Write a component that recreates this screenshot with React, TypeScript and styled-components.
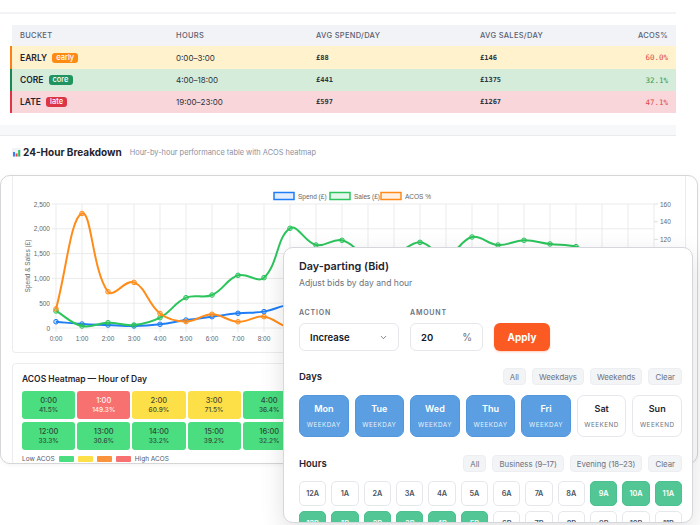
import React from 'react';
import styled, { createGlobalStyle } from 'styled-components';
import { ChevronDown } from 'lucide-react';

const GlobalStyle = createGlobalStyle`
  html, body { margin: 0; padding: 0; background: #fff; }
  body { font-family: Inter, "Noto Sans", sans-serif; -webkit-font-smoothing: antialiased; }
  * { box-sizing: border-box; }
`;

const Page = styled.div`
  position: relative;
  width: 700px;
  height: 525px;
  overflow: hidden;
  background: #fff;
`;

const TopStrip = styled.div`
  width: 676px;
  height: 14px;
  border-bottom: 2px solid #f2f3f6;
`;

const Table = styled.div`
  width: 666px;
  margin: 11px 0 0 10px;
`;

const Row = styled.div<{ $bg: string; $accent: string; $h: number }>`
  display: grid;
  grid-template-columns: 156px 140px 164px 1fr 80px;
  align-items: center;
  height: ${(p) => p.$h}px;
  padding: 0 8px;
  background: ${(p) => p.$bg};
  border-left: 2px solid ${(p) => p.$accent};
`;

const HeadCell = styled.div<{ $right?: boolean }>`
  font-size: 7.5px;
  font-weight: 500;
  color: #5b6072;
  letter-spacing: 0.3px;
  text-transform: uppercase;
  text-align: ${(p) => (p.$right ? 'right' : 'left')};
`;

const BucketCell = styled.div`
  display: flex;
  align-items: center;
  gap: 5px;
  font-size: 8.5px;
  font-weight: 600;
  color: #1f2430;
`;

const Badge = styled.span<{ $bg: string }>`
  font-size: 7.5px;
  font-weight: 500;
  line-height: 10px;
  color: #fff;
  background: ${(p) => p.$bg};
  padding: 0 4px;
  border-radius: 3px;
`;

const HoursCell = styled.div`
  font-size: 8px;
  color: #2d3340;
`;

const MoneyCell = styled.div`
  font-family: "DejaVu Sans Mono", "Liberation Mono", monospace;
  font-size: 7px;
  font-weight: 700;
  color: #2d3340;
`;

const AcosCell = styled.div<{ $color: string }>`
  font-family: "DejaVu Sans Mono", "Liberation Mono", monospace;
  font-size: 7.5px;
  color: ${(p) => p.$color};
  text-align: right;
`;

const Band = styled.div`
  width: 676px;
  height: 11px;
  margin-top: 12px;
  background: #f7f8fa;
  border-bottom: 1px solid #e9ebef;
`;

const SectionHead = styled.div`
  display: flex;
  align-items: center;
  height: 32px;
  padding-left: 12px;
`;

const SectionTitle = styled.span`
  margin-left: 2px;
  font-size: 10px;
  font-weight: 700;
  color: #1f2430;
`;

const SectionSub = styled.span`
  margin-left: 8px;
  font-size: 7.4px;
  color: #8b90a0;
`;

const Frame = styled.div`
  margin-top: 7px;
  width: 698px;
  height: 289px;
  border: 1px solid #d6d6d8;
  border-radius: 10px;
  overflow: hidden;
  padding: 0 11px;
  background: #fff;
  box-shadow: 0 1px 4px rgba(0, 0, 0, 0.05);
`;

const ChartCard = styled.div`
  height: 177px;
  border: 1px solid #ececee;
  border-top: none;
  border-radius: 0 0 4px 4px;
  overflow: hidden;
`;

const HeatCard = styled.div`
  margin-top: 10px;
  border: 1px solid #ececee;
  border-radius: 4px;
  padding: 9px 3px 0 9px;
`;

const HeatTitle = styled.div`
  font-size: 8.5px;
  font-weight: 600;
  line-height: 12px;
  color: #1f2430;
`;

const HeatGrid = styled.div`
  margin-top: 6px;
  display: grid;
  grid-template-columns: repeat(12, 1fr);
  gap: 3px 2px;
`;

const HeatCell = styled.div<{ $bg: string; $fg: string }>`
  height: 28px;
  border-radius: 3px;
  background: ${(p) => p.$bg};
  color: ${(p) => p.$fg};
  display: flex;
  flex-direction: column;
  align-items: center;
  justify-content: center;
  gap: 2px;
`;

const HeatHour = styled.span`
  font-size: 7.5px;
  font-weight: 500;
  line-height: 8px;
`;

const HeatPct = styled.span`
  font-size: 6.5px;
  font-weight: 500;
  line-height: 7px;
`;

const HeatLegend = styled.div`
  margin-top: 4px;
  display: flex;
  align-items: center;
  gap: 4px;
  height: 10px;
  font-size: 6.5px;
  color: #555a66;
`;

const Swatch = styled.span<{ $bg: string }>`
  width: 15px;
  height: 6px;
  border-radius: 1px;
  background: ${(p) => p.$bg};
`;

const Popup = styled.div`
  position: absolute;
  left: 283px;
  top: 247px;
  width: 410px;
  height: 276px;
  background: #fff;
  border: 1px solid #d5d7dc;
  border-radius: 10px;
  box-shadow: 0 8px 24px rgba(0, 0, 0, 0.12);
  overflow: hidden;
  padding: 11px 10px 0 15px;
`;

const PopTitle = styled.div`
  font-size: 10.8px;
  font-weight: 600;
  line-height: 16px;
  color: #1f2430;
`;

const PopSub = styled.div`
  margin-top: 2px;
  font-size: 8.6px;
  line-height: 12px;
  color: #6b7280;
`;

const Controls = styled.div`
  margin-top: 19px;
  display: flex;
  align-items: flex-end;
  gap: 11px;
`;

const Field = styled.div`
  display: flex;
  flex-direction: column;
`;

const FieldLabel = styled.div`
  font-size: 7px;
  font-weight: 600;
  line-height: 10px;
  letter-spacing: 0.8px;
  color: #6b7280;
  margin-bottom: 5px;
`;

const InputBox = styled.div<{ $w: number }>`
  width: ${(p) => p.$w}px;
  height: 28px;
  border: 1px solid #e5e7eb;
  border-radius: 6px;
  padding: 0 10px;
  display: flex;
  align-items: center;
  justify-content: space-between;
  font-size: 9.5px;
  font-weight: 600;
  color: #111827;
`;

const Unit = styled.span`
  font-size: 10px;
  font-weight: 400;
  color: #6b7280;
`;

const ApplyButton = styled.button`
  width: 56px;
  height: 28px;
  border: none;
  border-radius: 6px;
  background: #fb5a22;
  color: #fff;
  font-family: inherit;
  font-size: 10px;
  font-weight: 700;
  box-shadow: 0 1px 2px rgba(251, 90, 34, 0.3);
`;

const GroupHead = styled.div<{ $mt: number }>`
  margin-top: ${(p) => p.$mt}px;
  height: 17px;
  display: flex;
  align-items: center;
  justify-content: space-between;
`;

const GroupTitle = styled.span`
  font-size: 9.5px;
  font-weight: 600;
  color: #1f2430;
`;

const Chips = styled.div`
  display: flex;
  gap: 6px;
`;

const Chip = styled.button`
  height: 17px;
  padding: 0 6px;
  border: 1px solid #eceef2;
  border-radius: 4px;
  background: #f3f4f6;
  font-family: inherit;
  font-size: 7.8px;
  color: #6b7280;
`;

const DayGrid = styled.div`
  margin-top: 10px;
  display: grid;
  grid-template-columns: repeat(7, 1fr);
  gap: 6px;
`;

const DayTile = styled.div<{ $on: boolean }>`
  height: 42px;
  border-radius: 7px;
  border: 1px solid ${(p) => (p.$on ? '#5297dc' : '#e5e7eb')};
  background: ${(p) => (p.$on ? '#5b9fe2' : '#fff')};
  display: flex;
  flex-direction: column;
  align-items: center;
  justify-content: center;
  gap: 6px;
`;

const DayName = styled.span<{ $on: boolean }>`
  font-size: 9px;
  font-weight: 600;
  line-height: 12px;
  color: ${(p) => (p.$on ? '#fff' : '#1f2430')};
`;

const DaySub = styled.span<{ $on: boolean }>`
  font-size: 6.3px;
  line-height: 8px;
  letter-spacing: 0.5px;
  color: ${(p) => (p.$on ? 'rgba(255,255,255,0.88)' : '#6b7280')};
`;

const HourGrid = styled.div`
  margin-top: 9px;
  display: grid;
  grid-template-columns: repeat(12, 1fr);
  gap: 5px;
`;

const HourCell = styled.div<{ $on: boolean }>`
  height: 25px;
  border-radius: 5px;
  border: 1px solid ${(p) => (p.$on ? '#4cc08f' : '#e5e7eb')};
  background: ${(p) => (p.$on ? '#52c795' : '#fff')};
  color: ${(p) => (p.$on ? '#fff' : '#4b5563')};
  display: flex;
  align-items: center;
  justify-content: center;
  font-size: 7.3px;
  font-weight: 600;
`;

const buckets = [
  { name: 'EARLY', badge: 'early', badgeBg: '#fd8b12', bg: '#fff2cc', accent: '#fd7e14', hours: '0:00–3:00', spend: '£88', sales: '£146', acos: '60.0%', acosColor: '#e0474c', h: 23 },
  { name: 'CORE', badge: 'core', badgeBg: '#1f9360', bg: '#d5ecda', accent: '#198754', hours: '4:00–18:00', spend: '£441', sales: '£1375', acos: '32.1%', acosColor: '#2f9a5c', h: 22 },
  { name: 'LATE', badge: 'late', badgeBg: '#dc3545', bg: '#f8d6da', accent: '#dc3545', hours: '19:00–23:00', spend: '£597', sales: '£1267', acos: '47.1%', acosColor: '#e0474c', h: 22 },
];

const sales = [343, 40, 107, 60, 208, 611, 665, 1062, 1015, 2010, 1673, 1768, 1450, 1480, 1727, 1450, 1835, 1673, 1768, 1694, 1640, 1400, 1250, 1150];
const spend = [127, 80, 60, 40, 74, 160, 228, 296, 330, 470, 420, 460, 480, 440, 575, 570, 590, 590, 672, 678, 738, 754, 725, 750];
const acos = [41.5, 149.3, 60.9, 71.5, 36.4, 27.2, 35.5, 27.0, 32.8, 20.5, 24.5, 26.0, 33.3, 30.6, 33.2, 39.2, 32.2, 35.0, 38.4, 40.1, 45.3, 52.0, 58.6, 65.2];

const X0 = 56;
const DX = 26;
const xAt = (i: number) => X0 + i * DX;
const yLeft = (v: number) => 327 - v * 0.0496;
const yRight = (v: number) => 203 + (160 - v) * (124 / 140);

type P = { x: number; y: number };

// same spline as chart.js (tension 0.4)
function smoothPath(pts: P[], t = 0.4) {
  const cps = pts.map((cur, i) => {
    const prev = pts[i - 1] || cur;
    const next = pts[i + 1] || cur;
    const d01 = Math.hypot(cur.x - prev.x, cur.y - prev.y);
    const d12 = Math.hypot(next.x - cur.x, next.y - cur.y);
    const s01 = d01 + d12 ? d01 / (d01 + d12) : 0;
    const s12 = d01 + d12 ? d12 / (d01 + d12) : 0;
    const fa = t * s01;
    const fb = t * s12;
    return {
      p: { x: cur.x - fa * (next.x - prev.x), y: cur.y - fa * (next.y - prev.y) },
      n: { x: cur.x + fb * (next.x - prev.x), y: cur.y + fb * (next.y - prev.y) },
    };
  });
  let d = `M${pts[0].x},${pts[0].y}`;
  for (let i = 1; i < pts.length; i++) {
    const a = cps[i - 1].n;
    const b = cps[i].p;
    d += ` C${a.x.toFixed(2)},${a.y.toFixed(2)} ${b.x.toFixed(2)},${b.y.toFixed(2)} ${pts[i].x},${pts[i].y.toFixed(2)}`;
  }
  return d;
}

const series = [
  { color: '#1f7ef5', fill: 'rgba(31,126,245,0.25)', pts: spend.map((v, i) => ({ x: xAt(i), y: yLeft(v) })) },
  { color: '#2cc45c', fill: 'rgba(44,196,92,0.25)', pts: sales.map((v, i) => ({ x: xAt(i), y: yLeft(v) })) },
  { color: '#ff8c1a', fill: 'rgba(255,140,26,0.25)', pts: acos.map((v, i) => ({ x: xAt(i), y: yRight(v) })) },
];

const TrendChart = () => {
  const leftTicks = [0, 500, 1000, 1500, 2000, 2500];
  const rightTicks = [160, 140, 120, 100, 80, 60, 40, 20];
  const legend = [
    { x: 274, label: 'Spend (£)', color: '#1f7ef5', fill: '#e3eefd' },
    { x: 330, label: 'Sales (£)', color: '#2cc45c', fill: '#e4f7ea' },
    { x: 381, label: 'ACOS %', color: '#ff8c1a', fill: '#fff0e2' },
  ];
  return (
    <svg width={672} height={176} style={{ display: 'block' }}>
      <g transform="translate(-13,-175)" fontFamily='"Liberation Sans", Arial, sans-serif' fontSize={6.5} fill="#666">
        {legend.map((l) => (
          <g key={l.label}>
            <rect x={l.x} y={191.5} width={20} height={7} fill={l.fill} stroke={l.color} strokeWidth={1.5} />
            <text x={l.x + 24} y={197.5}>{l.label}</text>
          </g>
        ))}
        {leftTicks.map((v) => (
          <g key={v}>
            <line x1={52} x2={654} y1={yLeft(v)} y2={yLeft(v)} stroke="#ebebeb" strokeWidth={1} />
            <text x={50} y={yLeft(v) + 2.5} textAnchor="end">{v.toLocaleString('en-US')}</text>
          </g>
        ))}
        {acos.map((_, i) => (
          <g key={i}>
            <line x1={xAt(i)} x2={xAt(i)} y1={203} y2={331} stroke="#ebebeb" strokeWidth={1} />
            <text x={xAt(i)} y={340} textAnchor="middle">{`${i}:00`}</text>
          </g>
        ))}
        {rightTicks.map((v) => (
          <g key={v}>
            <line x1={654} x2={658} y1={yRight(v)} y2={yRight(v)} stroke="#e0e0e0" />
            <text x={660} y={yRight(v) + 2.5}>{v}</text>
          </g>
        ))}
        <text transform="translate(30,265) rotate(-90)" textAnchor="middle">Spend &amp; Sales (£)</text>
        {series.map((s, si) => (
          <g key={si}>
            <path d={smoothPath(s.pts)} fill="none" stroke={s.color} strokeWidth={2} />
            {s.pts.map((p, i) => (
              <circle key={i} cx={p.x} cy={p.y} r={2.3} fill={s.fill} stroke={s.color} strokeWidth={1} />
            ))}
          </g>
        ))}
      </g>
    </svg>
  );
};

const heatColour = (v: number) => {
  if (v >= 100) return { bg: '#f87171', fg: '#fff4f4' };
  if (v >= 80) return { bg: '#fb923c', fg: '#4b3a2a' };
  if (v >= 50) return { bg: '#fde047', fg: '#4f4a30' };
  return { bg: '#4ade80', fg: '#2f4a38' };
};

const days = [
  { d: 'Mon', on: true }, { d: 'Tue', on: true }, { d: 'Wed', on: true }, { d: 'Thu', on: true },
  { d: 'Fri', on: true }, { d: 'Sat', on: false }, { d: 'Sun', on: false },
];

const hourLabel = (h: number) => `${h % 12 === 0 ? 12 : h % 12}${h < 12 ? 'A' : 'P'}`;

const ChartIcon = () => (
  <svg width={9} height={9} viewBox="0 0 9 9">
    <rect x={0} y={0} width={9} height={9} rx={1} fill="#f1f3f6" />
    <rect x={1} y={4} width={2} height={4.5} fill="#3b82f6" />
    <rect x={3.6} y={5.5} width={2} height={3} fill="#ef4444" />
    <rect x={6.2} y={2} width={2} height={6.5} fill="#22c55e" />
  </svg>
);

export default function App() {
  return (
    <Page>
      <GlobalStyle />
      <TopStrip />
      <Table>
        <Row $bg="#f1f3f7" $accent="#fff" $h={21}>
          <HeadCell>Bucket</HeadCell>
          <HeadCell>Hours</HeadCell>
          <HeadCell>Avg Spend/Day</HeadCell>
          <HeadCell>Avg Sales/Day</HeadCell>
          <HeadCell $right>ACOS%</HeadCell>
        </Row>
        {buckets.map((b) => (
          <Row key={b.name} $bg={b.bg} $accent={b.accent} $h={b.h}>
            <BucketCell>
              {b.name}
              <Badge $bg={b.badgeBg}>{b.badge}</Badge>
            </BucketCell>
            <HoursCell>{b.hours}</HoursCell>
            <MoneyCell>{b.spend}</MoneyCell>
            <MoneyCell>{b.sales}</MoneyCell>
            <AcosCell $color={b.acosColor}>{b.acos}</AcosCell>
          </Row>
        ))}
      </Table>
      <Band />
      <SectionHead>
        <ChartIcon />
        <SectionTitle>24-Hour Breakdown</SectionTitle>
        <SectionSub>Hour-by-hour performance table with ACOS heatmap</SectionSub>
      </SectionHead>
      <Frame>
        <ChartCard>
          <TrendChart />
        </ChartCard>
        <HeatCard>
          <HeatTitle>ACOS Heatmap — Hour of Day</HeatTitle>
          <HeatGrid>
            {acos.map((v, i) => {
              const c = heatColour(v);
              return (
                <HeatCell key={i} $bg={c.bg} $fg={c.fg}>
                  <HeatHour>{`${i}:00`}</HeatHour>
                  <HeatPct>{`${v.toFixed(1)}%`}</HeatPct>
                </HeatCell>
              );
            })}
          </HeatGrid>
          <HeatLegend>
            Low ACOS
            <Swatch $bg="#4ade80" />
            <Swatch $bg="#fde047" />
            <Swatch $bg="#fb923c" />
            <Swatch $bg="#f87171" />
            High ACOS
          </HeatLegend>
        </HeatCard>
      </Frame>

      <Popup>
        <PopTitle>Day-parting (Bid)</PopTitle>
        <PopSub>Adjust bids by day and hour</PopSub>
        <Controls>
          <Field>
            <FieldLabel>ACTION</FieldLabel>
            <InputBox $w={100}>
              Increase
              <ChevronDown size={9} strokeWidth={2} color="#4b5563" />
            </InputBox>
          </Field>
          <Field>
            <FieldLabel>AMOUNT</FieldLabel>
            <InputBox $w={73}>
              20
              <Unit>%</Unit>
            </InputBox>
          </Field>
          <ApplyButton>Apply</ApplyButton>
        </Controls>

        <GroupHead $mt={17}>
          <GroupTitle>Days</GroupTitle>
          <Chips>
            <Chip>All</Chip>
            <Chip>Weekdays</Chip>
            <Chip>Weekends</Chip>
            <Chip>Clear</Chip>
          </Chips>
        </GroupHead>
        <DayGrid>
          {days.map((d) => (
            <DayTile key={d.d} $on={d.on}>
              <DayName $on={d.on}>{d.d}</DayName>
              <DaySub $on={d.on}>{d.on ? 'WEEKDAY' : 'WEEKEND'}</DaySub>
            </DayTile>
          ))}
        </DayGrid>

        <GroupHead $mt={18}>
          <GroupTitle>Hours</GroupTitle>
          <Chips>
            <Chip>All</Chip>
            <Chip>Business (9–17)</Chip>
            <Chip>Evening (18–23)</Chip>
            <Chip>Clear</Chip>
          </Chips>
        </GroupHead>
        <HourGrid>
          {Array.from({ length: 24 }, (_, h) => (
            <HourCell key={h} $on={h >= 9 && h <= 17}>{hourLabel(h)}</HourCell>
          ))}
        </HourGrid>
      </Popup>
    </Page>
  );
}
